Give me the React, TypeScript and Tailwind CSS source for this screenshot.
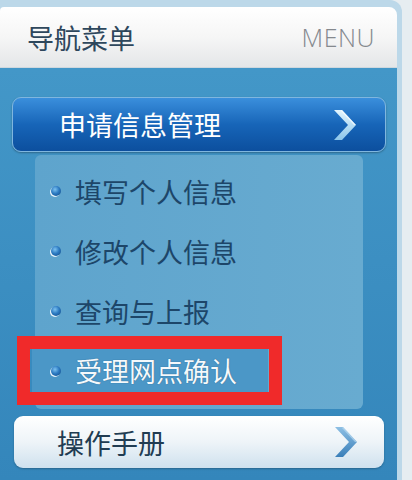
import React from 'react';

const cjk = { fontFamily: '"Noto Sans CJK SC", "Noto Sans", sans-serif' };

function Chevron({ light }: { light?: boolean }) {
  const id = light ? 'chevL' : 'chevD';
  return (
    <svg width="24" height="30" viewBox="0 0 24 30">
      <defs>
        <linearGradient id={id} x1="0" y1="0" x2="0" y2="1">
          <stop offset="0" stopColor={light ? '#e4f6ff' : '#8dbfe4'} />
          <stop offset="1" stopColor={light ? '#8cc6ea' : '#3a7fb9'} />
        </linearGradient>
      </defs>
      <polygon points="1,0 9,0 23,15 9,30 1,30 15,15" fill={`url(#${id})`} />
      <polygon points="9,0 23,15 21,15 8,1" fill={light ? '#ffffff' : '#b7d8f0'} opacity="0.7" />
    </svg>
  );
}

function Bullet() {
  return (
    <svg width="14" height="14" viewBox="0 0 14 14" className="shrink-0">
      <defs>
        <radialGradient id="bul" cx="0.4" cy="0.35" r="0.7">
          <stop offset="0" stopColor="#7cc2f0" />
          <stop offset="0.6" stopColor="#2a78c0" />
          <stop offset="1" stopColor="#1b5b9a" />
        </radialGradient>
      </defs>
      <circle cx="6" cy="8" r="5" fill="#eaf5fb" />
      <circle cx="7" cy="7" r="5" fill="url(#bul)" />
    </svg>
  );
}

const items = ['填写个人信息', '修改个人信息', '查询与上报', '受理网点确认'];

export default function App() {
  return (
    <div className="w-[412px] h-[480px] bg-[#e6edf1] overflow-hidden relative" style={cjk}>
      <div className="w-[402px] h-full bg-[#bcd8e9] rounded-tr-[12px] pt-[7px] pr-[5px] flex flex-col">
        {/* Header */}
        <div className="h-[61px] shrink-0 rounded-tl-[4px] rounded-tr-[8px] bg-gradient-to-b from-[#ffffff] via-[#f6f6f6] to-[#e4e6e8] border-b border-[#cfd8de] flex items-center justify-between pl-[27px] pr-[22px]">
          <span className="text-[27px] leading-none text-[#2e475c]">导航菜单</span>
          <span className="text-[25px] leading-none text-[#85898e] tracking-[0.5px]" style={{ fontFamily: '"Open Sans", "Liberation Sans", sans-serif', fontWeight: 300 }}>
            MENU
          </span>
        </div>

        {/* Body */}
        <div className="flex-1 bg-gradient-to-b from-[#4397c8] to-[#3486bb] flex flex-col pt-[29px]">
          <div className="ml-[12px] w-[374px] h-[55px] rounded-[9px] border border-[#7fb6df] bg-gradient-to-b from-[#3a8fdc] via-[#1765b8] to-[#0c4f9e] shadow-[0_1px_2px_rgba(0,0,0,0.3)] flex items-center justify-between pl-[46px] pr-[28px]">
            <span className="text-[27px] leading-none text-white">申请信息管理</span>
            <Chevron light />
          </div>

          <div className="ml-[35px] mt-[3px] w-[328px] h-[254px] rounded-[6px] bg-gradient-to-r from-[#5ea4cd] to-[#68abd0] pt-[6px] flex flex-col">
            {items.map((t, i) =>
              i === 3 ? (
                <div key={t} className="mt-[8px] -ml-[3px] w-[236px] h-[43px] bg-[#4b97c7] flex items-center pl-[17px] gap-[12px]">
                  <Bullet />
                  <span className="text-[27px] leading-none text-[#f4f9fc] [text-shadow:0_0_1px_#1e4f78]">{t}</span>
                </div>
              ) : (
                <div key={t} className="h-[60px] flex items-center pl-[14px] gap-[12px]">
                  <Bullet />
                  <span className="text-[27px] leading-none text-[#1d4669]">{t}</span>
                </div>
              )
            )}
          </div>

          <div className="ml-[14px] mt-[7px] w-[370px] h-[52px] rounded-[9px] bg-gradient-to-b from-[#ffffff] via-[#eef4f8] to-[#cfe1ee] shadow-[0_1px_2px_rgba(0,0,0,0.25)] flex items-center justify-between pl-[43px] pr-[26px]">
            <span className="text-[27px] leading-none text-[#213c52]">操作手册</span>
            <Chevron />
          </div>
        </div>
      </div>

      {/* red annotation box */}
      <div className="absolute left-[17px] top-[336px] w-[265px] h-[69px] border-[13px] border-[#f02a2a]" />
    </div>
  );
}
